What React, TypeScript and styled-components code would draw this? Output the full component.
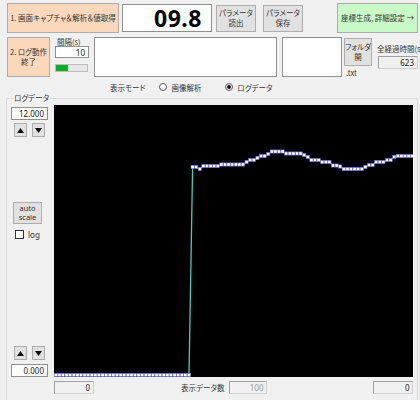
import styled, { createGlobalStyle } from 'styled-components';

const GlobalStyle = createGlobalStyle`
  html, body {
    margin: 0;
    padding: 0;
    background: #f0f0f0;
  }
  body {
    font-family: "Noto Sans CJK JP", "Noto Sans", sans-serif;
    font-size: 7.5px;
    font-feature-settings: "palt";
    color: #000;
  }
`;

const Page = styled.div`
  width: 420px;
  height: 400px;
  overflow: hidden;
  background: #f0f0f0;
  display: flex;
  flex-direction: column;
`;

const TopRow = styled.div`
  display: flex;
  align-items: center;
  height: 30px;
  padding: 3px 2px 0 7px;
`;

const SecondRow = styled.div`
  display: flex;
  align-items: flex-start;
  height: 41px;
  margin-top: 4px;
  padding-left: 7px;
`;

const WinButton = styled.button<{ $w: number; $h: number; $bg?: string; $ml?: number }>`
  width: ${(p) => p.$w}px;
  height: ${(p) => p.$h}px;
  margin-left: ${(p) => p.$ml ?? 0}px;
  background: ${(p) => p.$bg ?? '#e1e1e1'};
  border: 1px solid #adadad;
  padding: 0;
  font: inherit;
  font-size: 7.5px;
  line-height: 10px;
  color: #333;
  display: flex;
  align-items: center;
  justify-content: center;
  text-align: center;
  white-space: pre;
  overflow: hidden;
  flex-shrink: 0;
`;

const NumBox = styled.div`
  width: 90px;
  height: 28px;
  margin-left: 3px;
  box-sizing: border-box;
  background: #fff;
  border: 1px solid #8f8f8f;
  display: flex;
  align-items: center;
  justify-content: center;
  font-family: "Noto Sans", "Open Sans", sans-serif;
  font-weight: 700;
  font-size: 23px;
  letter-spacing: 0.5px;
  padding-left: 22px;
`;

const Spacer = styled.div`
  flex: 1;
`;

const Column = styled.div<{ $w: number; $ml: number }>`
  width: ${(p) => p.$w}px;
  margin-left: ${(p) => p.$ml}px;
  display: flex;
  flex-direction: column;
  flex-shrink: 0;
`;

const SmallLabel = styled.div<{ $pl?: number; $mt?: number }>`
  padding-left: ${(p) => p.$pl ?? 0}px;
  margin-top: ${(p) => p.$mt ?? 0}px;
  font-size: 7.5px;
  line-height: 9px;
  height: 9px;
  white-space: nowrap;
  color: #333;
`;

const Field = styled.div<{ $w: number; $h: number; $ro?: boolean; $gray?: boolean; $ml?: number }>`
  width: ${(p) => p.$w}px;
  height: ${(p) => p.$h}px;
  margin-left: ${(p) => p.$ml ?? 0}px;
  box-sizing: border-box;
  background: ${(p) => (p.$ro ? '#f0f0f0' : '#fff')};
  border: 1px solid ${(p) => (p.$ro ? '#d0d0d0' : '#8f8f8f')};
  border-top-color: ${(p) => (p.$ro ? '#a0a0a0' : '#8f8f8f')};
  border-left-color: ${(p) => (p.$ro ? '#a0a0a0' : '#8f8f8f')};
  display: flex;
  align-items: center;
  justify-content: flex-end;
  padding-right: 3px;
  font-size: 8px;
  color: ${(p) => (p.$gray ? '#9a9a9a' : '#222')};
  font-family: "Noto Sans", sans-serif;
  flex-shrink: 0;
`;

const Progress = styled.div`
  width: 33px;
  height: 8px;
  margin-top: 6px;
  box-sizing: border-box;
  background: #e6e6e6;
  border: 1px solid #bcbcbc;
  display: flex;
`;

const ProgressFill = styled.div`
  background: #06b025;
  height: 100%;
`;

const ModeRow = styled.div`
  display: flex;
  align-items: center;
  height: 14px;
  margin-top: 2px;
  padding-left: 110px;
  font-size: 7.5px;
  color: #333;
  white-space: nowrap;
`;

const RadioLabel = styled.label<{ $ml: number }>`
  display: flex;
  align-items: center;
  gap: 4px;
  margin-left: ${(p) => p.$ml}px;
`;

const RadioDot = styled.span<{ $on?: boolean }>`
  width: 8px;
  height: 8px;
  box-sizing: border-box;
  border-radius: 50%;
  border: 1px solid #555;
  background: #fff;
  display: flex;
  align-items: center;
  justify-content: center;
  &::after {
    content: '';
    width: 4px;
    height: 4px;
    border-radius: 50%;
    background: ${(p) => (p.$on ? '#111' : 'transparent')};
  }
`;

const Group = styled.fieldset`
  margin: 0 2px 0 6px;
  padding: 3px 0 0 4px;
  border: 1px solid #dcdcdc;
  border-bottom: none;
  flex: 1;
  min-height: 0;
  display: flex;
  flex-direction: column;
`;

const Legend = styled.legend`
  padding: 0 1px;
  margin-left: 2px;
  font-size: 7.5px;
  line-height: 8px;
  color: #333;
`;

const GroupBody = styled.div`
  display: flex;
  gap: 6px;
`;

const SideColumn = styled.div`
  width: 37px;
  height: 272px;
  display: flex;
  flex-direction: column;
  padding-top: 2px;
  box-sizing: border-box;
`;

const ArrowRow = styled.div<{ $mt?: number }>`
  display: flex;
  gap: 5px;
  padding-left: 3px;
  margin-top: ${(p) => p.$mt ?? 0}px;
`;

const ArrowBtn = styled.button`
  width: 13px;
  height: 14px;
  padding: 0;
  background: #e1e1e1;
  border: 1px solid #adadad;
  display: flex;
  align-items: center;
  justify-content: center;
`;

const Check = styled.label`
  display: flex;
  align-items: center;
  gap: 4px;
  margin: 5px 0 0 4px;
  font-family: "Noto Sans", sans-serif;
  font-size: 8px;
  color: #333;
`;

const CheckBox = styled.span`
  width: 9px;
  height: 9px;
  box-sizing: border-box;
  border: 1px solid #333;
  background: #fff;
`;

const ChartBox = styled.div`
  width: 359px;
  height: 272px;
  background: #000;
  border-right: 1px solid #fff;
`;

const BottomRow = styled.div`
  display: flex;
  align-items: center;
  height: 13px;
  margin-top: 4px;
  padding-left: 43px;
  font-size: 7.5px;
  color: #333;
  white-space: nowrap;
`;

const Triangle = ({ up }: { up?: boolean }) => (
  <svg width="7" height="5" viewBox="0 0 7 5">
    <polygon points={up ? '3.5,0 7,5 0,5' : '0,0 7,0 3.5,5'} fill="#111" />
  </svg>
);

const highs = [
  167, 167, 169, 166, 166, 166, 166, 166, 164.5, 164.5, 164.5, 164.5, 164.5, 164.5, 164.5,
  162, 160, 160, 158, 156, 156, 154, 151.5, 151.5, 151.5, 151.5, 153.5, 153.5, 153.5, 153.5,
  153.5, 155, 157, 160, 160, 160, 162, 162, 162, 165.5, 165.5, 166.5, 169, 169, 169, 169, 169,
  169, 167, 165, 165, 162, 162, 162, 160, 160, 157, 156, 156, 156, 156, 156,
];

const points = Array.from({ length: 100 }, (_, i) => {
  const x = 1.8 + 3.6 * i;
  const y = i < 38 ? 270 : highs[i - 38] - 105;
  return { x, y };
});

function Chart() {
  return (
    <ChartBox>
      <svg width="359" height="272" viewBox="0 0 359 272">
        <polyline
          points={points.map((p) => `${p.x},${p.y}`).join(' ')}
          fill="none"
          stroke="#4cc9b4"
          strokeWidth="1.3"
        />
        {points.map((p, i) => (
          <rect
            key={i}
            x={p.x - 1.6}
            y={p.y - 1.6}
            width="3.2"
            height="3.2"
            fill="#fff"
            stroke="#6a62d8"
            strokeWidth="0.6"
          />
        ))}
      </svg>
    </ChartBox>
  );
}

export default function App() {
  return (
    <Page>
      <GlobalStyle />
      <TopRow>
        <WinButton $w={112} $h={30} $bg="#fbd8bb">
          1. 画面キャプチャ＆解析＆値取得
        </WinButton>
        <NumBox>09.8</NumBox>
        <WinButton $w={40} $h={27} $ml={4}>
          {'パラメータ\n読出'}
        </WinButton>
        <WinButton $w={40} $h={27} $ml={7}>
          {'パラメータ\n保存'}
        </WinButton>
        <Spacer />
        <WinButton $w={81} $h={30} $bg="#c9f9c6">
          座標生成、詳細設定 →
        </WinButton>
      </TopRow>

      <SecondRow>
        <WinButton $w={43} $h={40} $bg="#fbd8bb">
          {'2. ログ動作\n終了'}
        </WinButton>
        <Column $w={34} $ml={5}>
          <SmallLabel $pl={2}>間隔(s)</SmallLabel>
          <Field $w={34} $h={12}>10</Field>
          <Progress>
            <ProgressFill style={{ width: '40%' }} />
          </Progress>
        </Column>
        <Field $w={183} $h={40} $ml={5} />
        <Field $w={60} $h={40} $ml={5} />
        <Column $w={28} $ml={2}>
          <WinButton $w={28} $h={28} style={{ marginTop: 1 }}>
            {'フォルダ\n開'}
          </WinButton>
          <SmallLabel $pl={2} $mt={2}>.txt</SmallLabel>
        </Column>
        <Column $w={42} $ml={5}>
          <SmallLabel $mt={7}>全経過時間(s</SmallLabel>
          <Field $w={40} $h={13} $ro $ml={1} style={{ marginTop: 3 }}>
            623
          </Field>
        </Column>
      </SecondRow>

      <ModeRow>
        表示モード
        <RadioLabel $ml={14}>
          <RadioDot />
          画像解析
        </RadioLabel>
        <RadioLabel $ml={24}>
          <RadioDot $on />
          ログデータ
        </RadioLabel>
      </ModeRow>

      <Group>
        <Legend>ログデータ</Legend>
        <GroupBody>
          <SideColumn>
            <Field $w={37} $h={13}>12.000</Field>
            <ArrowRow $mt={3}>
              <ArrowBtn><Triangle up /></ArrowBtn>
              <ArrowBtn><Triangle /></ArrowBtn>
            </ArrowRow>
            <WinButton $w={29} $h={22} $ml={2} style={{ marginTop: 65, fontFamily: '"Noto Sans", sans-serif', lineHeight: '9px' }}>
              {'auto\nscale'}
            </WinButton>
            <Check>
              <CheckBox />
              log
            </Check>
            <Spacer />
            <ArrowRow>
              <ArrowBtn><Triangle up /></ArrowBtn>
              <ArrowBtn><Triangle /></ArrowBtn>
            </ArrowRow>
            <Field $w={37} $h={13} style={{ marginTop: 4 }}>0.000</Field>
          </SideColumn>
          <Chart />
        </GroupBody>
        <BottomRow>
          <Field $w={40} $h={13} $ro>0</Field>
          <span style={{ marginLeft: 87 }}>表示データ数</span>
          <Field $w={38} $h={13} $ro $gray $ml={5}>100</Field>
          <Field $w={40} $h={13} $ro $ml={106}>0</Field>
        </BottomRow>
      </Group>
    </Page>
  );
}
